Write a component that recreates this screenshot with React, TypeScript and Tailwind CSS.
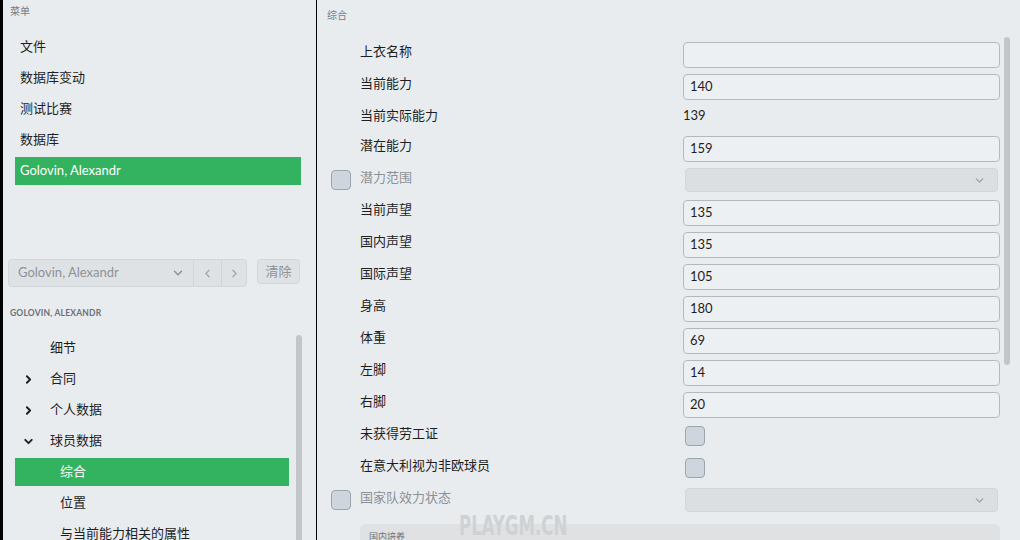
import { ChevronDown, ChevronLeft, ChevronRight } from 'lucide-react'

const FONT = 'font-["Lato","Noto_Sans_CJK_SC",sans-serif]'

const menuItems = ['文件', '数据库变动', '测试比赛', '数据库']

type Row =
  | { kind: 'input'; label: string; value: string }
  | { kind: 'text'; label: string; value: string }
  | { kind: 'select'; label: string }
  | { kind: 'check'; label: string }

const rows: Row[] = [
  { kind: 'input', label: '上衣名称', value: '' },
  { kind: 'input', label: '当前能力', value: '140' },
  { kind: 'text', label: '当前实际能力', value: '139' },
  { kind: 'input', label: '潜在能力', value: '159' },
  { kind: 'select', label: '潜力范围' },
  { kind: 'input', label: '当前声望', value: '135' },
  { kind: 'input', label: '国内声望', value: '135' },
  { kind: 'input', label: '国际声望', value: '105' },
  { kind: 'input', label: '身高', value: '180' },
  { kind: 'input', label: '体重', value: '69' },
  { kind: 'input', label: '左脚', value: '14' },
  { kind: 'input', label: '右脚', value: '20' },
  { kind: 'check', label: '未获得劳工证' },
  { kind: 'check', label: '在意大利视为非欧球员' },
  { kind: 'select', label: '国家队效力状态' },
]

function Checkbox() {
  return <div className="h-[20px] w-[20px] rounded-[4px] border border-[#9ba6b0] bg-[#ced5dc]" />
}

function FormRow({ row }: { row: Row }) {
  const disabled = row.kind === 'select'
  return (
    <div className={`flex ${row.kind === 'text' ? 'h-[30px]' : 'h-[32px]'}`}>
      <div className="w-[43px] shrink-0 pl-[14px] pt-[5px]">{disabled && <Checkbox />}</div>
      <div
        className={`w-[323px] shrink-0 text-[13px] leading-[24px] ${disabled ? 'text-[#8c9196]' : 'text-[#1e1e1e]'}`}
      >
        {row.label}
      </div>
      <div className="w-[317px] shrink-0">
        {row.kind === 'input' && (
          <div className="mt-[3px] flex h-[26px] items-center rounded-[4px] border border-[#b3babf] bg-[#edf0f2] pl-[6px] text-[13px] text-[#1e1e1e]">
            {row.value}
          </div>
        )}
        {row.kind === 'text' && <div className="text-[13px] leading-[24px] text-[#1e1e1e]">{row.value}</div>}
        {row.kind === 'select' && (
          <div className="mx-[2px] mt-[3px] flex h-[24px] items-center justify-end rounded-[4px] border border-[#d3d7da] bg-[#dcdfe2] pr-[11px]">
            <ChevronDown className="h-[13px] w-[13px] text-[#9aa0a5]" strokeWidth={2.5} />
          </div>
        )}
        {row.kind === 'check' && (
          <div className="ml-[2px] pt-[5px]">
            <Checkbox />
          </div>
        )}
      </div>
    </div>
  )
}

function TreeRow({
  label,
  chevron,
  indent = false,
  active = false,
}: {
  label: string
  chevron?: 'right' | 'down'
  indent?: boolean
  active?: boolean
}) {
  return (
    <div className={`flex h-[28px] items-center ${active ? 'bg-[#33b25f] text-white' : 'text-[#1e1e1e]'}`}>
      <div className="flex w-[35px] shrink-0 justify-center pl-[2px] pr-[10px]">
        {chevron === 'right' && <ChevronRight className="h-[13px] w-[13px]" strokeWidth={3.5} />}
        {chevron === 'down' && <ChevronDown className="h-[13px] w-[13px]" strokeWidth={3.5} />}
      </div>
      <span className={`text-[13px] ${indent ? 'pl-[10px]' : ''}`}>{label}</span>
    </div>
  )
}

export default function App() {
  return (
    <div className={`relative flex h-[540px] w-[1020px] overflow-hidden bg-[#e9ecef] ${FONT}`}>
      <div className="w-[3px] shrink-0 bg-black" />

      {/* left panel */}
      <aside className="relative flex w-[313px] shrink-0 flex-col">
        <div className="pl-[7px] pt-[5px] text-[10px] leading-[12px] text-[#777c81]">菜单</div>

        <div className="mt-[16px] flex flex-col gap-[3px] pl-[12px] pr-[15px]">
          {menuItems.map((m) => (
            <div key={m} className="flex h-[28px] items-center pl-[5px] text-[13px] text-[#1e1e1e]">
              {m}
            </div>
          ))}
          <div className="flex h-[28px] items-center bg-[#33b25f] pl-[5px] text-[13px] text-white">
            Golovin, Alexandr
          </div>
        </div>

        <div className="mt-[74px] flex items-start pl-[5px]">
          <div className="flex h-[28px] w-[239px] rounded-[4px] border border-[#d2d6da] bg-[#dfe2e5] text-[#8d9296]">
            <div className="flex w-[185px] items-center justify-between border-r border-[#d2d6da] pl-[9px] pr-[8px] text-[13px]">
              <span>Golovin, Alexandr</span>
              <ChevronDown className="h-[14px] w-[14px]" strokeWidth={2.5} />
            </div>
            <div className="flex w-[28px] items-center justify-center border-r border-[#d2d6da]">
              <ChevronLeft className="h-[13px] w-[13px] text-[#a3a8ad]" strokeWidth={2.5} />
            </div>
            <div className="flex flex-1 items-center justify-center">
              <ChevronRight className="h-[13px] w-[13px] text-[#a3a8ad]" strokeWidth={2.5} />
            </div>
          </div>
          <div className="ml-[10px] flex h-[25px] w-[43px] items-center justify-center rounded-[4px] border border-[#d2d6da] bg-[#dfe2e5] text-[13px] text-[#8d9296]">
            清除
          </div>
        </div>

        <div className="mt-[21px] pl-[7px] text-[8.5px] font-bold leading-[10px] tracking-[0.2px] text-[#6b7075]">
          GOLOVIN, ALEXANDR
        </div>

        <div className="mt-[16px] flex w-[286px] flex-col gap-[3px] pl-[12px]">
          <TreeRow label="细节" />
          <TreeRow label="合同" chevron="right" />
          <TreeRow label="个人数据" chevron="right" />
          <TreeRow label="球员数据" chevron="down" />
          <TreeRow label="综合" indent active />
          <TreeRow label="位置" indent />
          <TreeRow label="与当前能力相关的属性" indent />
        </div>

        <div className="absolute left-[293px] top-[335px] h-[220px] w-[6px] rounded-full bg-[#c3c6c9]" />
      </aside>

      <div className="w-px shrink-0 bg-black" />

      {/* right panel */}
      <main className="relative flex-1">
        <div className="pl-[10px] pt-[9px] text-[10px] leading-[12px] text-[#777c81]">综合</div>

        <div className="mt-[18px] flex flex-col">
          {rows.map((r) => (
            <FormRow key={r.label} row={r} />
          ))}
        </div>

        <div className="ml-[43px] mt-[7px] h-[40px] w-[640px] rounded-[6px] bg-[#dfe1e3] pl-[9px] pt-[8px] text-[9px] leading-[10px] text-[#6b7075]">
          国内培养
        </div>

        <div className="absolute right-[10px] top-[37px] h-[328px] w-[6px] rounded-full bg-[#c3c6c9]" />
      </main>

      <div className='pointer-events-none absolute left-[459px] top-[507px] origin-left scale-x-[0.71] font-["DejaVu_Sans_Condensed","DejaVu_Sans",sans-serif] text-[26px] font-bold text-[#cfd2d5]'>
        PLAYGM.CN
      </div>
    </div>
  )
}
